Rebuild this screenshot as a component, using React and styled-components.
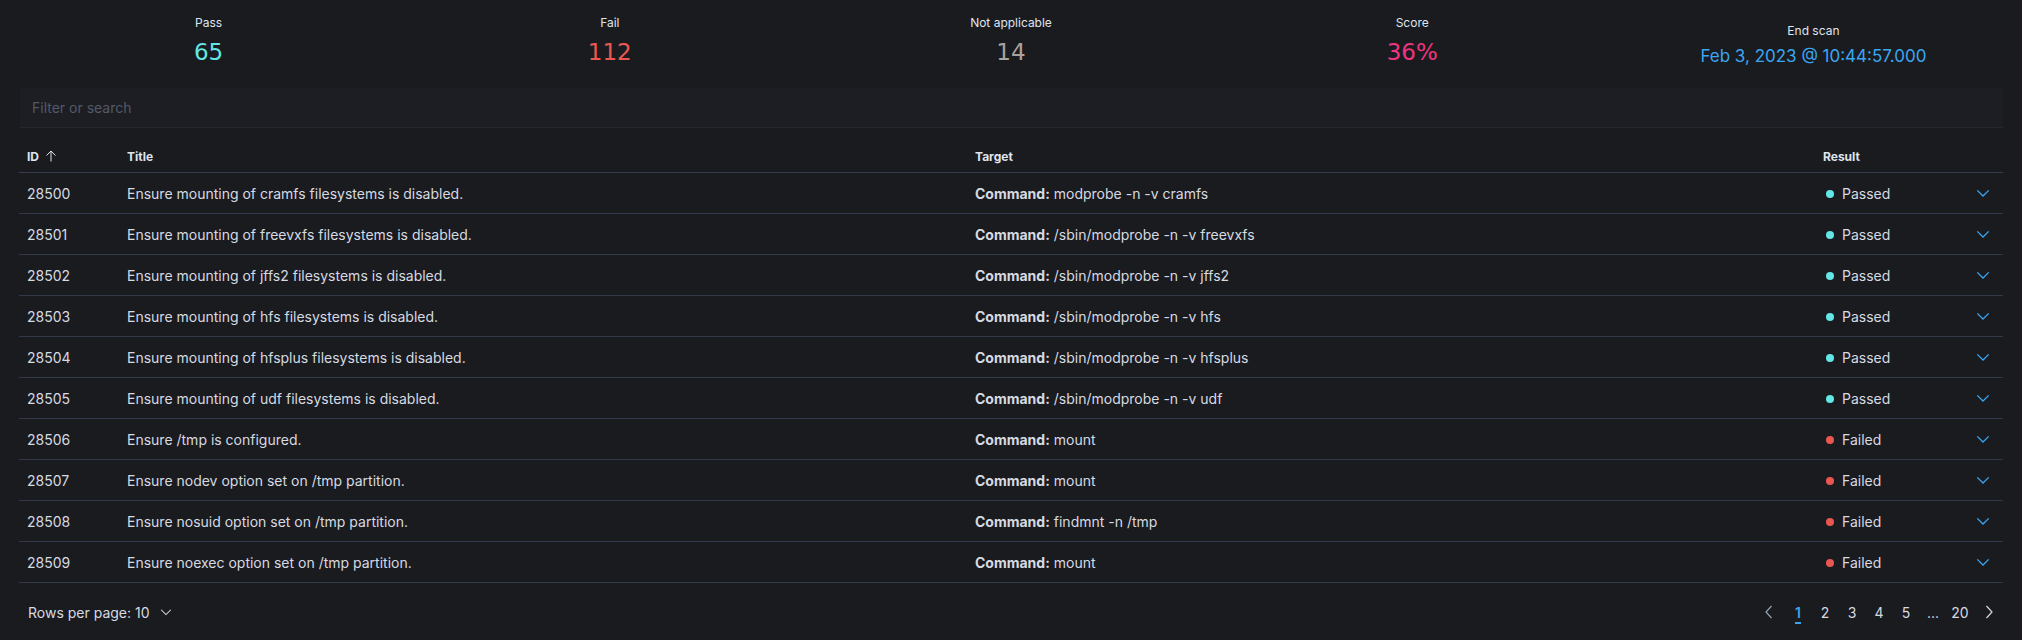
import styled, { createGlobalStyle } from "styled-components";

const GlobalStyle = createGlobalStyle`
  html, body {
    margin: 0;
    background: #1a1b1f;
  }
  body {
    font-family: Inter, "Noto Sans", sans-serif;
    color: #d6dae1;
  }
`;

const stats = [
  { label: "Pass", value: "65", color: "#62e6e6" },
  { label: "Fail", value: "112", color: "#ea5750" },
  { label: "Not applicable", value: "14", color: "#a8a39b" },
  { label: "Score", value: "36%", color: "#ee3580" },
  { label: "End scan", value: "Feb 3, 2023 @ 10:44:57.000", color: "#3aa6f2", small: true },
];

const checks = [
  ["28500", "Ensure mounting of cramfs filesystems is disabled.", "modprobe -n -v cramfs", true],
  ["28501", "Ensure mounting of freevxfs filesystems is disabled.", "/sbin/modprobe -n -v freevxfs", true],
  ["28502", "Ensure mounting of jffs2 filesystems is disabled.", "/sbin/modprobe -n -v jffs2", true],
  ["28503", "Ensure mounting of hfs filesystems is disabled.", "/sbin/modprobe -n -v hfs", true],
  ["28504", "Ensure mounting of hfsplus filesystems is disabled.", "/sbin/modprobe -n -v hfsplus", true],
  ["28505", "Ensure mounting of udf filesystems is disabled.", "/sbin/modprobe -n -v udf", true],
  ["28506", "Ensure /tmp is configured.", "mount", false],
  ["28507", "Ensure nodev option set on /tmp partition.", "mount", false],
  ["28508", "Ensure nosuid option set on /tmp partition.", "findmnt -n /tmp", false],
  ["28509", "Ensure noexec option set on /tmp partition.", "mount", false],
];

const ChevronDown = ({ color = "currentColor", size = 12, weight = 1.2 }) => (
  <svg width={size} height={size} viewBox="0 0 16 16" fill="none">
    <path d="M1.5 5l6.5 6.5L14.5 5" stroke={color} strokeWidth={weight} />
  </svg>
);

const ArrowSide = ({ left, color }) => (
  <svg width="8" height="14" viewBox="0 0 8 14" fill="none">
    <path d={left ? "M6.5 1L1 7l5.5 6" : "M1.5 1L7 7l-5.5 6"} stroke={color} strokeWidth="1.2" />
  </svg>
);

const SortUp = () => (
  <svg width="12" height="12" viewBox="0 0 12 12" fill="none">
    <path d="M6 1v10.5M1.5 5.5L6 1l4.5 4.5" stroke="#dfe5ef" strokeWidth="1" />
  </svg>
);

export default function App() {
  return (
    <Page>
      <GlobalStyle />
      <StatsRow>
        {stats.map((s) => (
          <Stat key={s.label}>
            <StatLabel>{s.label}</StatLabel>
            <StatValue $color={s.color} $small={s.small}>
              {s.value}
            </StatValue>
          </Stat>
        ))}
      </StatsRow>

      <SearchBox placeholder="Filter or search" />

      <Table>
        <colgroup>
          <col style={{ width: 100 }} />
          <col style={{ width: 848 }} />
          <col style={{ width: 848 }} />
          <col style={{ width: 148 }} />
          <col style={{ width: 40 }} />
        </colgroup>
        <thead>
          <tr>
            <Th>
              <SortHead>
                ID <SortUp />
              </SortHead>
            </Th>
            <Th>Title</Th>
            <Th>Target</Th>
            <Th>Result</Th>
            <Th />
          </tr>
        </thead>
        <tbody>
          {checks.map(([id, title, cmd, passed]) => (
            <tr key={id}>
              <Td>{id}</Td>
              <Td>{title}</Td>
              <Td>
                <b>Command:</b> {cmd}
              </Td>
              <Td>
                <Result>
                  <Dot $color={passed ? "#62e6e6" : "#ea5750"} />
                  {passed ? "Passed" : "Failed"}
                </Result>
              </Td>
              <ExpandCell>
                <ChevronDown color="#3aa6f2" size={14} weight={1.5} />
              </ExpandCell>
            </tr>
          ))}
        </tbody>
      </Table>

      <Footer>
        <RowsPerPage>
          Rows per page: 10 <ChevronDown color="#d6dae1" size={12} weight={1.4} />
        </RowsPerPage>
        <Pagination>
          <PageButton $arrow>
            <ArrowSide left color="#98a2b3" />
          </PageButton>
          {["1", "2", "3", "4", "5", "...", "20"].map((p) => (
            <PageButton key={p} $active={p === "1"}>
              {p}
            </PageButton>
          ))}
          <PageButton $arrow>
            <ArrowSide color="#d6dae1" />
          </PageButton>
        </Pagination>
      </Footer>
    </Page>
  );
}

const Page = styled.div`
  padding-top: 15px;
`;

const StatsRow = styled.div`
  display: flex;
  align-items: flex-end;
  padding: 0 8px;
`;

const Stat = styled.div`
  flex: 1 1 0;
  display: flex;
  flex-direction: column;
  align-items: center;
  gap: 6px;
`;

const StatLabel = styled.div`
  font-size: 12px;
  line-height: 16px;
  color: #dfe5ef;
`;

const StatValue = styled.div`
  color: ${(p) => p.$color};
  font-family: ${(p) => (p.$small ? 'Inter, "Noto Sans", sans-serif' : '"DejaVu Sans", sans-serif')};
  font-weight: 400;
  font-size: ${(p) => (p.$small ? "17px" : "23px")};
  line-height: ${(p) => (p.$small ? "22px" : "30px")};
`;

const SearchBox = styled.input`
  display: block;
  box-sizing: border-box;
  margin: 21px 19px 0 20px;
  width: calc(100% - 39px);
  height: 40px;
  padding: 0 12px;
  background: #1d1e23;
  border: none;
  border-bottom: 1px solid #26272c;
  font-family: Inter, "Noto Sans", sans-serif;
  font-size: 14px;
  color: #dfe5ef;
  outline: none;

  &::placeholder {
    color: #535966;
  }
`;

const Table = styled.table`
  margin: 12px 19px 0 19px;
  width: calc(100% - 38px);
  table-layout: fixed;
  border-collapse: collapse;
  font-size: 14px;
`;

const Th = styled.th`
  height: 32px;
  padding: 0 8px;
  text-align: left;
  font-size: 12px;
  font-weight: 700;
  color: #dfe5ef;
  border-bottom: 1px solid #363d4c;
  vertical-align: middle;
`;

const SortHead = styled.span`
  display: inline-flex;
  align-items: center;
  gap: 6px;
`;

const Td = styled.td`
  height: 40px;
  padding: 0 8px;
  color: #d6dae1;
  border-bottom: 1px solid #30384a;
  white-space: nowrap;
  vertical-align: middle;

  b {
    font-weight: 700;
  }
`;

const ExpandCell = styled(Td)`
  text-align: center;
  padding: 0;
  line-height: 0;
`;

const Result = styled.span`
  display: inline-flex;
  align-items: center;
  gap: 8px;
  padding-left: 3px;
`;

const Dot = styled.span`
  width: 8px;
  height: 8px;
  border-radius: 50%;
  background: ${(p) => p.$color};
`;

const Footer = styled.div`
  display: flex;
  align-items: center;
  justify-content: space-between;
  height: 58px;
  padding: 0 19px 0 28px;
`;

const RowsPerPage = styled.div`
  display: flex;
  align-items: center;
  gap: 10px;
  font-size: 14px;
  color: #d6dae1;
`;

const Pagination = styled.div`
  display: flex;
  align-items: center;
  gap: 3px;
`;

const PageButton = styled.span`
  min-width: ${(p) => (p.$arrow ? "28px" : "24px")};
  height: 24px;
  padding: 0 2px;
  box-sizing: border-box;
  display: flex;
  align-items: center;
  justify-content: center;
  font-size: 14px;
  color: ${(p) => (p.$active ? "#3aa6f2" : "#d6dae1")};
  font-weight: ${(p) => (p.$active ? 600 : 400)};
  text-decoration: ${(p) => (p.$active ? "underline" : "none")};
  text-underline-offset: 4px;
  text-decoration-thickness: 2px;
`;
